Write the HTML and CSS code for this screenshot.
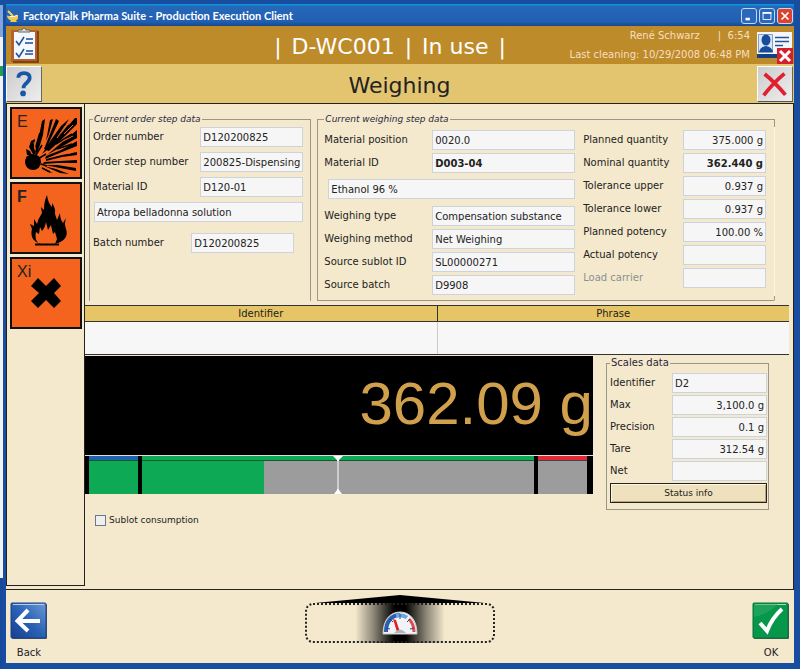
FILE: index.html
```html
<!DOCTYPE html>
<html lang="en">
<head>
<meta charset="utf-8">
<title>FactoryTalk Pharma Suite - Production Execution Client</title>
<link rel="stylesheet" href="styles.css">
</head>
<body>
<div class="desktop">
<div class="window">
  <header class="titlebar">
    <svg class="app-icon" viewBox="0 0 12 12" aria-hidden="true"><path d="M1 1l5 5" stroke="#f6d26a" stroke-width="2"/><path d="M0 5.500c3 1 8 1 11-1v3c0 2-1 2-2 3l1 1.500H3l1-1.500C1.500 9.500 0 8 0 5.500z" fill="#f5c94a"/><path d="M3 6.500q4 .5 7-1" stroke="#fff" fill="none"/></svg>
    <h1>FactoryTalk Pharma Suite - Production Execution Client</h1>
    <div class="window-buttons">
      <button type="button" aria-label="Minimize"><svg viewBox="0 0 16 16"><path d="M4 11.500h5" stroke="#fff" stroke-width="3"/></svg></button>
      <button type="button" aria-label="Maximize"><svg viewBox="0 0 16 16"><path d="M3.500 4h9v8h-9z" fill="none" stroke="#fff"/><path d="M3 4.500h10" stroke="#fff" stroke-width="2"/></svg></button>
      <button type="button" class="close" aria-label="Close"><svg viewBox="0 0 16 16"><path d="M4 4l8 8M12 4l-8 8" stroke="#fff" stroke-width="2"/></svg></button>
    </div>
  </header>

  <div class="status-bar">
    <button type="button" class="plain" aria-label="Task list">
      <svg class="clipboard" viewBox="0 0 30 36"><path d="M1 3h27v32H1z" fill="#b5602c"/><path d="M28 4v31H3" fill="none" stroke="#6b3312" stroke-width="1.500"/><path d="M4 5h21v27H4z" fill="#f4f7fb"/><path d="M8 5V3h4q2-4 4 0h4v2z" fill="#ddd" stroke="#666"/><path d="M6 14l3 4 5-8M6 26l3 4 5-8" fill="none" stroke="#17509f" stroke-width="1.500"/><path d="M16 12h7M15 16h8M16 24h7M15 27h8" stroke="#17509f" stroke-width="1.500"/></svg>
    </button>
    <p class="station"><span>|</span><span>D-WC001</span><span>|</span><span>In use</span><span>|</span></p>
    <div class="session">
      <p><span>René Schwarz</span><span class="time">|&nbsp; 6:54</span></p>
      <p>Last cleaning: 10/29/2008 06:48 PM</p>
    </div>
    <button type="button" class="plain" aria-label="Log off">
      <svg class="badge" viewBox="0 0 36 33"><path d="M0 1h35v24H0z" fill="#f4f6fa"/><path d="M0 23h35v4H0z" fill="#123f86"/><path d="M1.500 3.500h14v18h-14z" fill="#dbe8f7" stroke="#7f9fc8"/><ellipse cx="9" cy="9" rx="4.500" ry="5.500" fill="#174c9c"/><path d="M2 21q1-5 7-6 6 1 7 6z" fill="#174c9c"/><path d="M18 6.500h14M18 10.500h14M18 14.500h8" stroke="#24539a" stroke-width="1.500"/><path d="M20 17h16v16H20z" fill="#d3202c"/><path d="M23 20l10 10M33 20L23 30" stroke="#fff" stroke-width="3"/></svg>
    </button>
  </div>

  <div class="phase-bar">
    <button type="button" class="tile" aria-label="Help"><svg viewBox="0 0 36 36"><path d="M12 11.500C12 7 15 6.500 18 6.500c4 0 6 2 6 5 0 3.500-3 5-5 7-1 1-1.500 2-1.500 4" fill="none" stroke="#1857a8" stroke-width="4"/><circle cx="17" cy="28" r="3" fill="#1857a8"/></svg></button>
    <h2>Weighing</h2>
    <button type="button" class="tile" aria-label="Cancel"><svg viewBox="0 0 36 36"><path d="M7 7.500q11 9 22 22M28 7q-11 9-22 23" fill="none" stroke="#e11f2e" stroke-width="4"/></svg></button>
  </div>

  <main class="workspace">
    <aside class="hazards" aria-label="Hazard symbols">
      <div class="hazard"><span>E</span>
        <svg viewBox="0 0 70 70"><circle cx="22" cy="54" r="8"/><path d="M31 13l3-2-2 16-3 10-3 8-2-1 3-11zM39 12l3-1-4 15-3 7zM50 18l8-7-10 17-12 14-5 4 9-14zM64 10l2 0v6L54 28 38 43l-3-1 16-17zM66 22v8L50 39 36 47l13-11zM66 33v5l-15 6-17 7 1-3 15-6zM66 44v3l-15 2-16 4v-2l16-4zM66 52v3H46l-14 1 1-2 16-1zM65 60v3l-16-3-15-3h12zM58 66l-9-1-16-7 12 3zM42 65l-5-1-7-5zM20 33l4-2-1 9 2 6-3 0-4-7zM15 41l4 2 2 4-5 0zM15 49l5-2-3 4zM28 25l2 1-5 15-1-2zM45 11l3 2-13 28-2 0z"/><path d="M58 17L45 33M61 26L45 36M61 36l-15 5M32 16l-2 12M27 51l8-5M25 47l6-10M30 56l6 2M31 60l8 4" stroke="#000" stroke-width="1.500"/><path d="M54 18l-8 12M62 17l-9 9M62 28l-10 5M60 45h-6M23 34l1 6" stroke="#f4641e" stroke-width="1"/></svg>
      </div>
      <div class="hazard"><span class="strong">F</span>
        <svg viewBox="0 0 70 70"><path d="M30 61C22 59 19 53 21 46l-2-5 4 2v-7l3 5q1-5 5-11l-1-6 3 3q0-9 3-15 1 8 5 12l0-4q4 6 3 11l2 6 3-7q0 6 3 10l3-5q-2 6 0 11c3 8-3 13-11 15l2-5-2-7-2 2-2-9-3 5-2-8q-1 6-4 9l-2-4-1 7-3-2q-2 7 3 12z"/><path d="M24 61.500h24" stroke="#000" stroke-width="2"/></svg>
      </div>
      <div class="hazard"><span>Xi</span>
        <svg viewBox="0 0 70 70"><path d="M27 20l8 8 8-8 7 8-7 7 7 8-7 7-8-8-8 8-7-7 8-8-8-7z"/></svg>
      </div>
    </aside>

    <div class="content">
      <form class="step-data">
        <fieldset class="order-step">
          <legend>Current order step data</legend>
          <div class="row"><label for="order">Order number</label><input id="order" value="D120200825" readonly></div>
          <div class="row"><label for="ostep">Order step number</label><input id="ostep" class="tail" value="D120200825-Dispensing" readonly></div>
          <div class="row"><label for="omat">Material ID</label><input id="omat" value="D120-01" readonly></div>
          <div class="wide"><input aria-label="Material name" value="Atropa belladonna solution" readonly></div>
          <div class="row batch"><label for="batch">Batch number</label><input id="batch" value="D120200825" readonly></div>
        </fieldset>

        <fieldset class="weighing-step">
          <legend>Current weighing step data</legend>
          <div class="source">
            <div class="row"><label for="pos">Material position</label><input id="pos" value="0020.0" readonly></div>
            <div class="row"><label for="mat">Material ID</label><input id="mat" class="strong" value="D003-04" readonly></div>
            <div class="wide"><input aria-label="Weighed material" value="Ethanol 96 %" readonly></div>
            <div class="row"><label for="type">Weighing type</label><input id="type" value="Compensation substance" readonly></div>
            <div class="row"><label for="method">Weighing method</label><input id="method" value="Net Weighing" readonly></div>
            <div class="row"><label for="sublot">Source sublot ID</label><input id="sublot" value="SL00000271" readonly></div>
            <div class="row"><label for="sbatch">Source batch</label><input id="sbatch" value="D9908" readonly></div>
          </div>
          <div class="quantities">
            <div class="row"><label for="pq">Planned quantity</label><input id="pq" value="375.000 g" readonly></div>
            <div class="row"><label for="nq">Nominal quantity</label><input id="nq" class="strong" value="362.440 g" readonly></div>
            <div class="row"><label for="tu">Tolerance upper</label><input id="tu" value="0.937 g" readonly></div>
            <div class="row"><label for="tl">Tolerance lower</label><input id="tl" value="0.937 g" readonly></div>
            <div class="row"><label for="pp">Planned potency</label><input id="pp" value="100.00 %" readonly></div>
            <div class="row"><label for="ap">Actual potency</label><input id="ap" value="" readonly></div>
            <div class="row"><label for="lc" class="muted">Load carrier</label><input id="lc" value="" readonly></div>
          </div>
        </fieldset>
      </form>

      <table class="phrases">
        <thead><tr><th>Identifier</th><th>Phrase</th></tr></thead>
        <tbody><tr><td></td><td></td></tr></tbody>
      </table>

      <div class="scale-area">
        <section class="scale" aria-label="Scale">
          <output class="reading">362.09 g</output>
          <div class="gauge">
            <div class="zone under"></div>
            <div class="zone range"><svg class="target" viewBox="0 0 10 38"><path d="M0 0h10L6 4v30l3 4H1l3-4V4z" fill="#fff"/><path d="M4 5v28M6 5v28" stroke="#9c9c9c"/></svg></div>
            <div class="zone over"></div>
          </div>
          <label class="check"><input type="checkbox">Sublot consumption</label>
        </section>

        <fieldset class="scales-data">
          <legend>Scales data</legend>
          <div class="row"><label for="sid">Identifier</label><input id="sid" class="start" value="D2" readonly></div>
          <div class="row"><label for="max">Max</label><input id="max" value="3,100.0 g" readonly></div>
          <div class="row"><label for="prec">Precision</label><input id="prec" value="0.1 g" readonly></div>
          <div class="row"><label for="tare">Tare</label><input id="tare" value="312.54 g" readonly></div>
          <div class="row"><label for="net">Net</label><input id="net" value="" readonly></div>
          <button type="button">Status info</button>
        </fieldset>
      </div>
    </div>
  </main>

  <footer class="actions">
    <button type="button" class="action">
      <svg viewBox="0 0 36 36"><defs><linearGradient id="blue" x1="1" y1="0" x2="0" y2="1"><stop offset="0" stop-color="#6d9ad6"/><stop offset=".5" stop-color="#2a62b4"/><stop offset="1" stop-color="#153f92"/></linearGradient></defs><rect x="1" y="1" width="35" height="35" rx="1" fill="#555"/><rect width="35" height="35" rx="1" fill="url(#blue)" stroke="#164188"/><path d="M2 1.500h31" stroke="#b5cdec"/><path d="M29 18H7M17 7L6.500 18 17 28" fill="none" stroke="#fff" stroke-width="4"/></svg>
      <span>Back</span>
    </button>
    <div class="carousel">
      <svg class="roof" viewBox="0 0 170 8" preserveAspectRatio="none" aria-hidden="true"><path d="M0 8L85 0l85 8z"/></svg>
      <button type="button" class="slot" aria-label="Scale view">
        <svg viewBox="0 0 36 24"><path d="M1 23C1 9 8 1 18 1s17 8 17 22z" fill="#f2f3f5" stroke="#ccc"/><path d="M4 21C4 10 10 4 18 4" fill="none" stroke="#2b5eb0" stroke-width="4"/><path d="M14 4.500q7-1 11 2" fill="none" stroke="#6aa6de" stroke-width="4"/><path d="M27 8q5 5 5 13" fill="none" stroke="#e24b55" stroke-width="3"/><path d="M18 3v5M8 8l3 3M28 8l-3 3M4 17l4 1M32 17l-4 1" stroke="#234c87"/><path d="M11 8l3 1 4 12-3 0z" fill="#e0202c"/><path d="M12 22q6-7 12 0z" fill="#aeb4bb"/></svg>
      </button>
    </div>
    <button type="button" class="action">
      <svg viewBox="0 0 36 36"><rect x="1" y="1" width="35" height="35" rx="1" fill="#555"/><rect width="35" height="35" rx="1" fill="#07974a" stroke="#0b6e39"/><path d="M2 1.500h31" stroke="#a8d9b9"/><path d="M1 1h24Q14 12 1 14z" fill="#34ad6c" opacity=".5"/><path d="M7 20l7 8Q19 15 29 6" fill="none" stroke="#fff" stroke-width="4"/></svg>
      <span>OK</span>
    </button>
  </footer>
</div>
</div>
</body>
</html>
```

FILE: styles.css
```css
* { box-sizing: border-box; }

body {
  margin: 0;
  color: #222;
  font: 10px/14px "DejaVu Sans", Verdana, sans-serif;
}

h1, h2, p { margin: 0; font-weight: normal; }

button, input { font: inherit; color: inherit; }

button { padding: 0; border: 0; background: none; }

svg { display: block; }

.desktop {
  min-height: 100vh;
  display: flex;
  padding-left: 3px;
  background: linear-gradient(#164f9e 5px, #7fa5dc 5px 37px, #f3f3f3 37px 66px, #1da04f 66px 76px, #f3f3f3 76px 578px, #174a9c 578px) left / 3px 100% no-repeat #174a9c;
}

.window {
  flex: 1;
  display: flex;
  flex-direction: column;
  padding: 4px 6px 6px 3px;
  background: #184d9f;
}

.titlebar {
  display: flex;
  align-items: center;
  gap: 4px;
  height: 22px;
  padding: 2px 1px 0;
  background: linear-gradient(#0895dc 1px, #2868b8 2px, #205fb2 80%, #174a8c);
}

.app-icon { width: 12px; height: 12px; }

.titlebar h1 {
  flex: 1;
  color: #fff;
  font: bold 11px/14px Lato, "Trebuchet MS", sans-serif;
}

.window-buttons { display: flex; gap: 2px; }

.window-buttons button {
  width: 16px;
  height: 16px;
  border: 1px solid #c4d8f2;
  border-radius: 3px;
  background: #2a68c0;
}

.window-buttons .close { background: #dd432c; }

.status-bar, .phase-bar {
  display: grid;
  align-items: center;
}

.status-bar {
  grid-template-columns: 216px 1fr 192px 36px;
  gap: 7px;
  height: 38px;
  padding-right: 1px;
  background: #be8b2a;
  color: #fff;
}

.clipboard { width: 30px; height: 36px; margin-left: 4px; }

.badge { width: 36px; height: 33px; margin-top: 4px; }

.station {
  display: flex;
  justify-content: center;
  gap: 10px;
  padding-top: 3px;
  font-size: 22px;
  line-height: 26px;
  white-space: nowrap;
}

.session {
  color: #f6dfc0;
  text-align: right;
  line-height: 19px;
  white-space: nowrap;
}

.time { margin-left: 18px; }

.phase-bar {
  grid-template-columns: 36px 1fr 36px;
  height: 40px;
  padding-right: 1px;
  border-bottom: 1px solid #222;
  background: #e4c56f;
}

.phase-bar h2 {
  padding-top: 4px;
  font-size: 22px;
  line-height: 30px;
  text-align: center;
}

.tile {
  width: 36px;
  height: 36px;
  border: 1px solid #fff;
  border-right-color: #666;
  border-bottom-color: #555;
  background: linear-gradient(135deg, #ccc, #eee);
}

.workspace {
  flex: 1;
  display: flex;
  border-right: 1px solid #222;
  background: #f4e9cd;
}

.hazards {
  width: 79px;
  margin-bottom: 3px;
  padding: 3px 2px 3px 3px;
  border: 1px solid #222;
  border-top: 0;
  display: flex;
  flex-direction: column;
  gap: 3px;
}

.hazard {
  position: relative;
  height: 72px;
  border: 1px solid #111;
  outline: 1px solid #111;
  outline-offset: -2px;
  background: #f4641e;
}

.hazard span {
  position: absolute;
  top: 6px;
  left: 6px;
  font: 16px/16px "Liberation Sans", Arial, sans-serif;
}

.hazard .strong { font-weight: bold; }

.content {
  flex: 1;
  min-width: 0;
  padding: 9px 4px 0 0;
}

fieldset { min-width: 0; margin: 0; border: 1px solid #9c9689; }

legend { padding: 0 1px; line-height: 12px; color: #2a2740; }

.row { display: flex; align-items: center; }

.row label { flex: 1; white-space: nowrap; }

.row input, .wide input {
  height: 20px;
  padding: 0 2px;
  border: 1px solid #ccd3dc;
  background: #f6f6f6;
}

.wide input { width: 100%; }

.strong { font-weight: bold; }

.muted { color: #8b8f93; }

.step-data {
  display: grid;
  grid-template-columns: 223fr 459fr;
  gap: 6px;
  padding: 0 14px 0 4px;
}

.step-data legend { font-size: 9px; font-style: italic; }

.order-step {
  display: flex;
  flex-direction: column;
  gap: 5px;
  padding: 2px 7px 0 3px;
  border-bottom: 0;
}

.order-step .row input { width: 103px; }

.order-step .wide { padding-left: 1px; }

.order-step .batch { margin-top: 6px; padding-right: 9px; }

.order-step .tail { direction: rtl; }

.weighing-step {
  position: relative;
  display: grid;
  grid-template-columns: 251fr 183fr;
  gap: 8px;
  padding: 5px 8px 5px 6px;
  border-right-color: #fdf6e2;
}

/* short corner ticks on the light right-hand edge */
.weighing-step::before, .weighing-step::after {
  content: "";
  position: absolute;
  right: -1px;
  width: 1px;
  background: #9c9689;
}

.weighing-step::before { top: -6px; height: 8px; }

.weighing-step::after { bottom: 0; height: 4px; }

.source, .quantities { display: flex; flex-direction: column; gap: 3px; }

.source .row input { width: 57%; }

.source .wide { margin: 3px 0 4px; padding-left: 4px; }

.quantities .row input { width: 83px; text-align: right; }

.phrases {
  width: 100%;
  margin-top: 4px;
  border-collapse: collapse;
  table-layout: fixed;
  background: #f7f7f7;
}

.phrases th {
  height: 16px;
  padding: 0;
  border: 1px solid #333;
  border-width: 1px 0;
  background: #e6c567;
  font-weight: normal;
  line-height: 14px;
}

.phrases td { height: 33px; padding: 0; border-bottom: 1px solid #333; }

.phrases th + th { border-left: 1px solid #333; }

.phrases td + td { border-left: 1px solid #ccc; }

.scale-area {
  display: grid;
  grid-template-columns: 508fr 163fr;
  align-items: start;
  gap: 13px;
  padding: 1px 20px 0 0;
}

.reading {
  display: block;
  height: 99px;
  background: #000;
  color: #d1a04d;
  font: 60px/96px "Liberation Sans", Arial, sans-serif;
  text-align: right;
}

.gauge {
  display: grid;
  grid-template-columns: 49fr 391fr 49fr;
  gap: 4px;
  height: 39px;
  padding: 0 6px 0 4px;
  border-top: 1px solid #ddd;
  background: #000;
}

.zone {
  position: relative;
  border-top: 4px solid #0da955;
  background: linear-gradient(#444 1px, transparent 1px) #9c9c9c;
}

.under { border-color: #1f62ae; background: linear-gradient(#0b5a32 1px, #0da955 1px); }

.range { background: linear-gradient(#0b5a32 1px, transparent 1px), linear-gradient(90deg, #0da955 31%, #9c9c9c 31%); }

.over { border-color: #e52836; }

.target {
  position: absolute;
  top: -4px;
  left: 50%;
  width: 10px;
  height: 38px;
  transform: translateX(-50%);
}

.check {
  display: flex;
  align-items: center;
  gap: 3px;
  margin: 19px 0 0 10px;
  font-size: 9px;
}

.check input {
  appearance: none;
  width: 11px;
  height: 11px;
  margin: 0;
  border: 1px solid #6d7684;
  background: #eef0f0;
}

.scales-data {
  display: flex;
  flex-direction: column;
  gap: 2px;
  margin-top: 1px;
  padding: 4px 1px 6px 3px;
}

.scales-data .row input { width: 95px; text-align: right; }

.scales-data .row .start { text-align: left; }

.scales-data button {
  height: 20px;
  border: 1px solid #222;
  box-shadow: inset 1px 1px #fff8e4, inset -1px -1px #b9a778;
  background: #efe1bd;
  font-size: 9px;
}

.actions {
  display: flex;
  justify-content: space-between;
  align-items: flex-start;
  height: 74px;
  padding: 5px 5px 0;
  border-top: 1px solid #222;
  background: #f4e9cd;
}

.action { margin-top: 8px; }

.action svg { width: 36px; height: 36px; overflow: visible; }

.action span { display: block; margin-top: 7px; }

.carousel { width: 190px; }

.roof { width: 170px; height: 8px; margin: 0 auto; }

.slot {
  width: 100%;
  height: 40px;
  display: flex;
  justify-content: center;
  align-items: center;
  border: 2px dotted #222;
  border-radius: 8px;
  background: linear-gradient(90deg, transparent 26%, #8a8474 36%, #000 47%, #000 53%, #8a8474 64%, transparent 74%);
}

.slot svg { width: 36px; height: 24px; }
```
